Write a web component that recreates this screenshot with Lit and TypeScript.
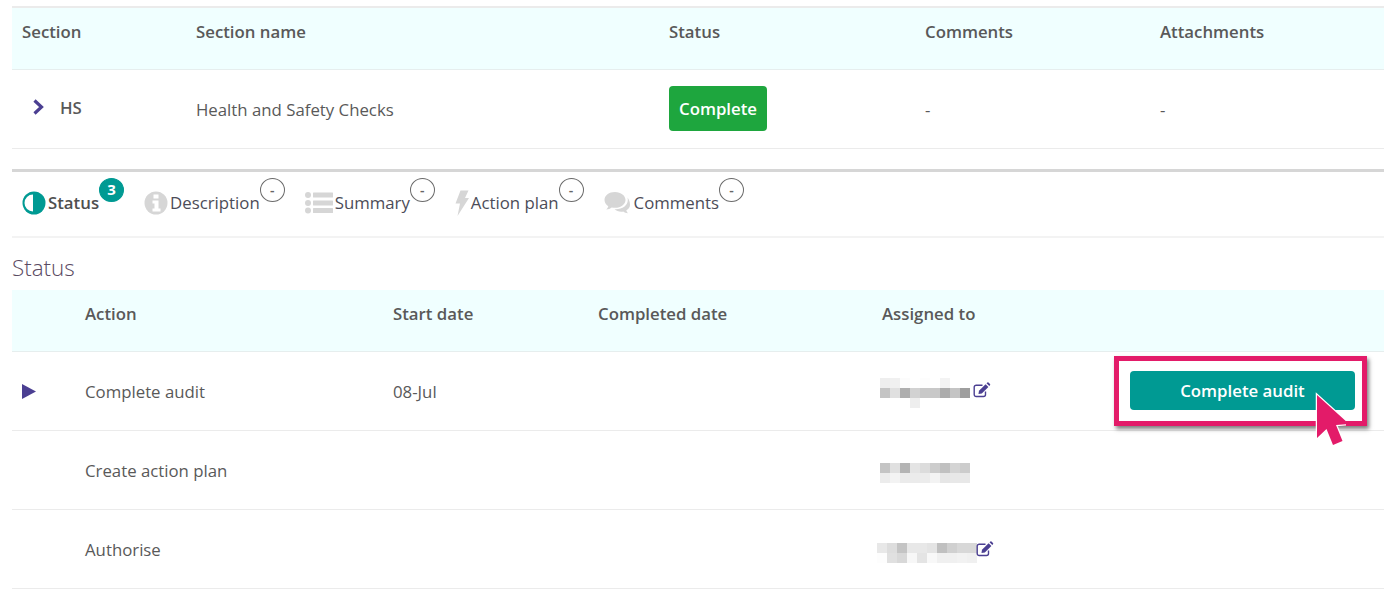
import { LitElement, html, css, svg } from "lit";
import { customElement } from "lit/decorators.js";

const g = (s: string) => s.split(" ").map((v) => (v === "-" ? "transparent" : "#" + v));

const editIcon = svg`<svg class="edit" viewBox="0 0 18 16" width="18" height="16"><path d="M12.500 9.500v3a2 2 0 0 1-2 2H3.200a2 2 0 0 1-2-2V5.200a2 2 0 0 1 2-2h6.300" fill="none" stroke="#4b3f92" stroke-width="1.400"/><path d="M6 8.800 12.600 2.200l2.800 2.800L8.800 11.600 5.500 12.100z" fill="#4b3f92"/><path d="M13.500 1.300l.9-.7a.8.8 0 0 1 1.100 0l1.500 1.500a.8.8 0 0 1 0 1.100l-.7.9z" fill="#4b3f92"/></svg>`;

const tabs = [
  { label: "Status", badge: "3", active: true, icon: svg`<svg viewBox="0 0 24 24" width="24" height="24"><circle cx="12" cy="12" r="11.500" fill="#009a93"/><path d="M11 3.500a8.500 8.500 0 0 0 0 17z" fill="#fff"/></svg>` },
  { label: "Description", badge: "-", icon: svg`<svg viewBox="0 0 24 24" width="24" height="24"><circle cx="12" cy="12" r="11.500" fill="#d6d6d6"/><path d="M9.500 3.500h5v4h-5zM8.500 9.500h6v8h2v3h-8v-3h2v-5h-2z" fill="#fff"/></svg>` },
  { label: "Summary", badge: "-", icon: svg`<svg viewBox="0 0 28 24" width="28" height="24"><g fill="#d6d6d6"><circle cx="3" cy="4" r="3"/><circle cx="3" cy="12" r="3"/><circle cx="3" cy="19.500" r="3"/><rect x="8" y="1.500" width="20" height="5" rx=".5"/><rect x="8" y="9.500" width="20" height="5" rx=".5"/><rect x="8" y="17" width="20" height="5" rx=".5"/></g></svg>` },
  { label: "Action plan", badge: "-", icon: svg`<svg viewBox="0 0 14 28" width="14" height="28"><path d="M5.500 1.500h8l-3.500 7.500h4L2.500 27 5 14.500H.5z" fill="#d6d6d6"/></svg>` },
  { label: "Comments", badge: "-", icon: svg`<svg viewBox="0 0 28 24" width="28" height="24"><path d="M11 1C5 1 .5 4.500.5 9c0 2.600 1.500 4.800 3.800 6.200-.3 1.300-1 2.400-2 3.300 2.100-.2 4-1 5.400-2.100 1.100.3 2.200.4 3.300.4 6 0 10.500-3.500 10.500-7.800S17 1 11 1z" fill="#d6d6d6"/><path d="M23.500 6.500c.2.800.3 1.600.3 2.500 0 5.300-5.300 9.300-12 9.300h-1.300c1.800 1.500 4.100 2.400 6.800 2.400.7 0 1.400-.1 2-.2 1.300 1 2.800 1.600 4.700 1.800-.8-.8-1.400-1.800-1.700-3 2.300-1.200 3.700-3.200 3.700-5.500 0-2.900-.8-5-2.500-7.300z" fill="#d6d6d6"/></svg>` },
];

const names: Record<string, string[][]> = {
  a: [
    g("eeeeee f0f0f0 fcfcfc ffffff fdfdfd ffffff f3f3f3 ffffff ffffff"),
    g("c4c4c4 e0e0e0 aeaeae d2d2d2 c8c8c8 c8c8c8 acacac c4c4c4 9e9e9e"),
    g("- - - eeeeee - - - - -"),
  ],
  b: [
    g("c4c4c4 e0e0e0 b4b4b4 e4e4e4 dcdcdc cccccc c0c0c0 d4d4d4 cccccc"),
    g("ececec f3f3f3 ebebeb ebebeb ececec f3f3f3 e6e6e6 e8e8e8 e8e8e8"),
  ],
  c: [
    g("e8e8e8 dddddd c4c4c4 e8e8e8 e8e8e8 e4e4e4 c0c0c0 d0d0d0 d8d8d8 d8d8d8"),
    g("fdfdfd e0e0e0 d8d8d8 f7f7f7 e4e4e4 f8f8f8 f0f0f0 f0f0f0 f2f2f2 f0f0f0"),
  ],
};

@customElement("app-root")
export class AppRoot extends LitElement {
  static styles = css`
    :host {
      display: block;
      position: relative;
      height: 595px;
      padding: 6px 0 0 12px;
      box-sizing: border-box;
      overflow: hidden;
      background: #fff;
      font-family: "Open Sans", sans-serif;
      font-size: 16.8px;
      color: #595959;
    }
    .top-table {
      --cols: 174px 473px 256px 235px 1fr;
    }
    .low-table {
      --cols: 63px 308px 205px 284px 1fr;
    }
    .row {
      display: grid;
      grid-template-columns: var(--cols);
      align-items: center;
      box-sizing: border-box;
      border-bottom: 1px solid #ebebeb;
      height: 79px;
      padding-left: 10px;
    }
    .head {
      height: 62px;
      background: #f0ffff;
      font-weight: 600;
      align-items: start;
      padding-top: 12px;
      border-bottom: 1px solid #e6eeee;
    }
    .top-table .head {
      height: 64px;
      border-top: 2px solid #ebebeb;
    }
    .sec {
      display: flex;
      align-items: center;
      gap: 16px;
      padding-left: 10px;
      margin-top: -4px;
      font-weight: 600;
    }
    .chev {
      display: block;
    }
    .pill {
      display: block;
      width: fit-content;
      background: #1ea63e;
      color: #fff;
      font-weight: 600;
      border-radius: 4px;
      height: 45px;
      line-height: 45px;
      padding: 0 10px;
      margin-top: -1px;
    }
    .divider {
      margin-top: 20px;
      height: 3px;
      background: #d6d6d6;
    }
    .tabs {
      display: flex;
      gap: 20px;
      height: 64px;
      padding-left: 10px;
      border-bottom: 2px solid #f3f3f3;
    }
    .tab {
      display: flex;
      align-items: flex-start;
      color: #4c4c58;
    }
    .tab .ic {
      display: flex;
      align-items: center;
      height: 28px;
      margin-top: 17px;
    }
    .tab .lbl {
      margin-top: 19px;
      line-height: 24px;
      margin-left: 2px;
    }
    .tab.on .lbl {
      font-weight: 600;
      color: #4f4f4f;
    }
    .badge {
      box-sizing: border-box;
      width: 25px;
      height: 24px;
      margin-top: 6px;
      border-radius: 50%;
      border: 1px solid #6b6b6b;
      background: #fff;
      text-align: center;
      font-size: 14px;
      line-height: 21px;
      font-weight: 600;
      color: #666;
    }
    .badge.on {
      background: #009a93;
      border-color: #009a93;
      color: #fff;
      font-weight: 700;
      font-size: 15px;
    }
    h2 {
      margin: 0;
      font-weight: 300;
      font-size: 22.4px;
      line-height: 27px;
      height: 27px;
      padding-top: 16px;
      padding-bottom: 9px;
      color: #5a4a62;
    }
    .tri {
      display: block;
    }
    .person {
      display: flex;
      align-items: flex-start;
      align-self: start;
    }
    .pa {
      margin: 26px 0 0 -2px;
      gap: 3px;
    }
    .pb {
      margin: 32px 0 0 -2px;
    }
    .pc {
      margin: 33px 0 0 -5px;
    }
    .blur {
      display: flex;
      flex-direction: column;
    }
    .pr {
      display: flex;
    }
    .blur i {
      display: block;
      flex: none;
      width: 10px;
      height: 10px;
    }
    .edit {
      display: block;
    }
    .pa .edit {
      margin-top: 4px;
    }
    .pc .edit {
      margin-top: -2px;
      margin-left: -1px;
    }
    .do {
      position: absolute;
      left: 1130px;
      top: 371px;
      width: 225px;
      height: 39px;
      line-height: 39px;
      text-align: center;
      color: #fff;
      background: #009a93;
      border-radius: 4px;
      font-weight: 600;
    }
    .callout {
      position: absolute;
      left: 1114px;
      top: 356px;
      width: 253px;
      height: 70px;
      box-sizing: border-box;
      border: 5px solid #e31b69;
      box-shadow: 2px 3px 4px rgba(0, 0, 0, 0.5);
      pointer-events: none;
    }
    .cursor {
      position: absolute;
      left: 1312px;
      top: 392px;
      pointer-events: none;
    }
  `;

  private blur(k: string) {
    return html`<div class="blur">
      ${names[k].map(
        (r) => html`<div class="pr">${r.map((c) => html`<i style="background:${c}"></i>`)}</div>`
      )}
    </div>`;
  }

  render() {
    return html`
      <div class="top-table">
        <div class="row head">
          <div>Section</div><div>Section name</div><div>Status</div><div>Comments</div><div>Attachments</div>
        </div>
        <div class="row">
          <div class="sec">
            <svg class="chev" viewBox="0 0 12 16" width="12" height="16"><path d="M2.500 1.500 9.500 8l-7 6.500" fill="none" stroke="#4b3f92" stroke-width="3.200"/></svg>
            HS
          </div>
          <div>Health and Safety Checks</div>
          <div><span class="pill">Complete</span></div>
          <div>-</div>
          <div>-</div>
        </div>
      </div>
      <div class="divider"></div>
      <div class="tabs">
        ${tabs.map(
          (t) => html`<div class="tab ${t.active ? "on" : ""}">
            <span class="ic">${t.icon}</span>
            <span class="lbl">${t.label}</span>
            <span class="badge ${t.active ? "on" : ""}">${t.badge}</span>
          </div>`
        )}
      </div>
      <h2>Status</h2>
      <div class="low-table">
        <div class="row head">
          <div></div><div>Action</div><div>Start date</div><div>Completed date</div><div>Assigned to</div>
        </div>
        <div class="row">
          <div><svg class="tri" viewBox="0 0 14 15" width="14" height="15"><path d="M0 0 14 7.500 0 15z" fill="#4b3f92"/></svg></div>
          <div>Complete audit</div>
          <div>08-Jul</div>
          <div></div>
          <div class="person pa">${this.blur("a")}${editIcon}</div>
        </div>
        <div class="row">
          <div></div>
          <div>Create action plan</div>
          <div></div>
          <div></div>
          <div class="person pb">${this.blur("b")}</div>
        </div>
        <div class="row">
          <div></div>
          <div>Authorise</div>
          <div></div>
          <div></div>
          <div class="person pc">${this.blur("c")}${editIcon}</div>
        </div>
      </div>
      <span class="do">Complete audit</span>
      <div class="callout"></div>
      <svg class="cursor" viewBox="0 0 34 60" width="34" height="60">
        <path d="M5 3 5 46 14.500 37 21 53 30.500 49 24 33 37 32z" fill="#e31b69" stroke="#fff" stroke-width="2.500" paint-order="stroke"/>
      </svg>
    `;
  }
}
